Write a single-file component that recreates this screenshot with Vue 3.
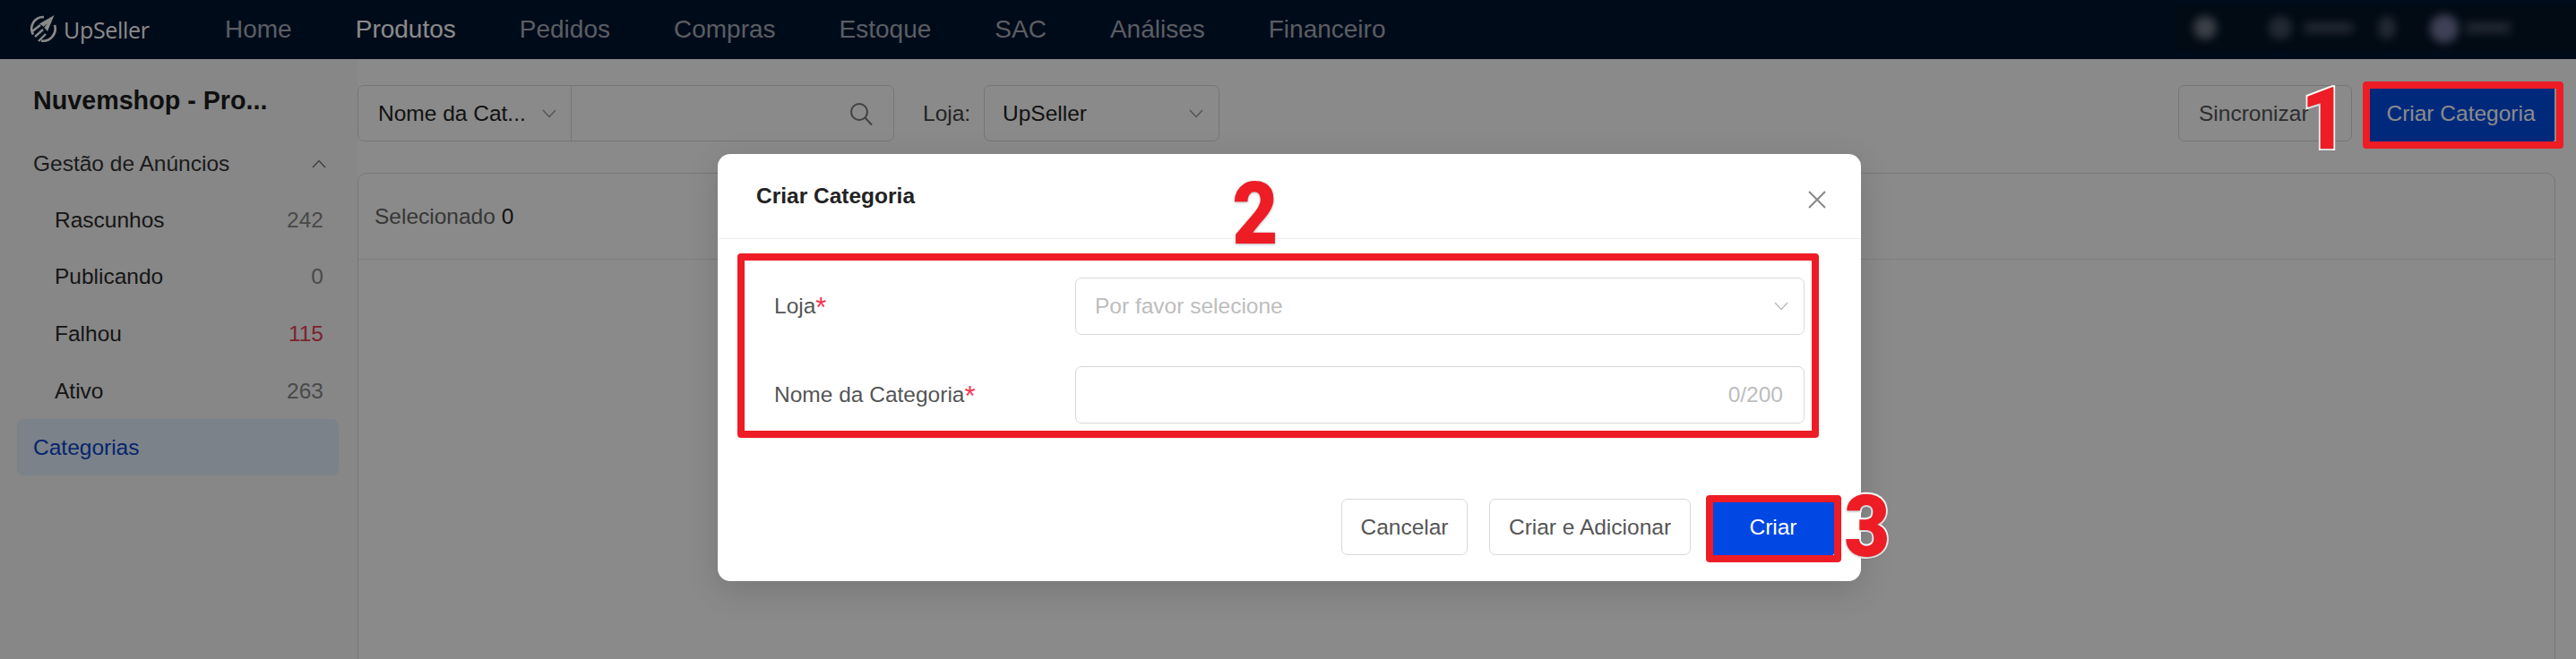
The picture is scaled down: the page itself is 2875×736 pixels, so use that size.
<script setup>
const nav = ['Home', 'Produtos', 'Pedidos', 'Compras', 'Estoque', 'SAC', 'Análises', 'Financeiro']
const items = [
  { label: 'Rascunhos', count: 242 },
  { label: 'Publicando', count: 0 },
  { label: 'Falhou', count: 115, danger: true },
  { label: 'Ativo', count: 263 }
]
</script>

<template>
  <div class="page">
    <header class="topbar">
      <div class="logo">
        <svg class="logo-mark" viewBox="0 0 32 32" width="32" height="32" fill="none">
          <path d="M5 22.5A13 13 0 0 1 17 3" stroke="#8c8c8c" stroke-width="2.6" />
          <path d="M29 12A13.5 13.5 0 0 1 14 29.5" stroke="#8c8c8c" stroke-width="2.6" />
          <path d="M28.5 1 12 10.5l4.6 3.2 4.2-3.4-3.4 4.4 3.6 4.4z" fill="#8c8c8c" />
          <path d="M4 19 13 12M7 25 16 17M11 30 19 22" stroke="#8c8c8c" stroke-width="2.4" />
        </svg>
        <span class="logo-text">UpSeller</span>
      </div>
      <nav class="nav">
        <a v-for="n in nav" :key="n" :class="{ active: n === 'Produtos' }">{{ n }}</a>
      </nav>
      <div class="blurred">
        <i class="dot d1"></i>
        <i class="dot d2"></i><i class="bar b1"></i>
        <i class="dot d3"></i>
        <i class="dot d4"></i><i class="bar b2"></i>
      </div>
    </header>

    <div class="content">
      <aside class="sidebar">
        <h2>Nuvemshop - Pro...</h2>
        <div class="group">
          <span>Gestão de Anúncios</span>
          <svg width="16" height="10" viewBox="0 0 16 10" fill="none"><path d="M1 9 8 1.5 15 9" stroke="#777" stroke-width="1.5" /></svg>
        </div>
        <div v-for="it in items" :key="it.label" class="item">
          <span>{{ it.label }}</span>
          <span class="count" :class="{ danger: it.danger }">{{ it.count }}</span>
        </div>
        <div class="selected">Categorias</div>
      </aside>

      <main class="main">
        <div class="toolbar">
          <div class="search">
            <div class="search-type">
              <span>Nome da Cat...</span>
              <svg class="chev" width="16" height="10" viewBox="0 0 16 10" fill="none"><path d="M1 1 8 8.5 15 1" stroke="#999" stroke-width="1.4" /></svg>
            </div>
            <div class="search-box">
              <svg width="26" height="26" viewBox="0 0 26 26" fill="none"><circle cx="11" cy="11" r="9" stroke="#777" stroke-width="2" /><path d="M17.5 17.5 25 25.5" stroke="#777" stroke-width="2" /></svg>
            </div>
          </div>
          <span class="loja">Loja:</span>
          <div class="store">
            <span>UpSeller</span>
            <svg class="chev" width="16" height="10" viewBox="0 0 16 10" fill="none"><path d="M1 1 8 8.5 15 1" stroke="#999" stroke-width="1.4" /></svg>
          </div>
          <div class="actions">
            <button class="btn">Sincronizar</button>
            <button class="btn primary">Criar Categoria</button>
          </div>
        </div>
        <section class="card">
          <div class="card-head">Selecionado <b>0</b></div>
        </section>
      </main>
    </div>

    <div class="overlay">
      <div class="dialog">
        <div class="dialog-head">
          <span>Criar Categoria</span>
          <svg width="20" height="20" viewBox="0 0 20 20" fill="none"><path d="M1 1 19 19M19 1 1 19" stroke="#888" stroke-width="2" /></svg>
        </div>
        <div class="form">
          <div class="row">
            <label>Loja<em>*</em></label>
            <div class="field">
              <span class="ph">Por favor selecione</span>
              <svg width="16" height="10" viewBox="0 0 16 10" fill="none"><path d="M1 1 8 8.5 15 1" stroke="#bbb" stroke-width="1.4" /></svg>
            </div>
          </div>
          <div class="row">
            <label>Nome da Categoria<em>*</em></label>
            <div class="field end"><span class="ph">0/200</span></div>
          </div>
        </div>
        <div class="footer">
          <button class="btn light">Cancelar</button>
          <button class="btn light">Criar e Adicionar</button>
          <button class="btn blue">Criar</button>
        </div>
      </div>
    </div>

    <div class="mark m1"></div>
    <div class="mark m2"></div>
    <div class="mark m3"></div>
    <span class="num n1">1</span>
    <span class="num n2">2</span>
    <span class="num n3">3</span>
  </div>
</template>

<style scoped>
.page {
  position: relative;
  width: 2875px;
  height: 736px;
  overflow: hidden;
  background: #fff;
  font-family: "Liberation Sans", Arial, sans-serif;
  font-size: 24.5px;
  color: #333;
}
.topbar {
  height: 66px;
  background: #001630;
  display: flex;
  align-items: center;
  padding-left: 32px;
  position: relative;
}
.logo { display: flex; align-items: center; width: 220px; flex: none; }
.logo-mark { filter: brightness(1.85); margin-top: -3px; }
.logo-text { margin-left: 7px; font-family: "Open Sans", sans-serif; font-size: 25px; color: #fff; letter-spacing: -0.3px; }
.nav { display: flex; gap: 71px; font-size: 28px; color: #a7acb8; margin-left: -1px; }
.nav .active { color: #fff; }
.blurred {
  position: absolute;
  left: 2430px;
  top: 8px;
  width: 445px;
  height: 48px;
  background: #041426;
  filter: blur(1.5px);
}
.dot, .bar { position: absolute; filter: blur(5px); }
.dot { width: 26px; height: 26px; border-radius: 50%; top: 10px; background: #5a6475; }
.bar { height: 12px; top: 17px; background: #3f4a5c; }
.d1 { left: 18px; background: #6f7785; }
.d2 { left: 102px; background: #404d60; }
.b1 { left: 142px; width: 54px; }
.d3 { left: 224px; width: 20px; background: #404d60; }
.d4 { left: 282px; width: 32px; height: 32px; top: 8px; background: #74799f; }
.b2 { left: 322px; width: 50px; }

.content { display: flex; height: 670px; }
.sidebar {
  width: 399px;
  flex: none;
  background: #fafafa;
  box-sizing: border-box;
  padding: 29px 21px 0 19px;
}
.sidebar h2 {
  margin: 0 0 0 18px;
  font-size: 28.7px;
  line-height: 34px;
  font-weight: 700;
  color: #1c1c1c;
}
.group {
  margin-top: 22px;
  padding: 0 0 0 18px;
  height: 63px;
  display: flex;
  align-items: center;
  justify-content: space-between;
  color: #333;
}
.group svg { margin-right: 14px; }
.item {
  height: 63.6px;
  padding: 0 17px 0 42px;
  display: flex;
  align-items: center;
  justify-content: space-between;
  color: #2a2a2a;
}
.count { color: #888; }
.count.danger { color: #e94057; }
.selected {
  height: 63px;
  padding-left: 18px;
  display: flex;
  align-items: center;
  background: #e5f0ff;
  border-radius: 7px;
  color: #0a45c8;
}

.main { flex: 1; min-width: 0; padding: 29px 24px 0 0; background: #fff; }
.toolbar { display: flex; align-items: center; height: 63px; }
.search {
  width: 599px;
  height: 63px;
  box-sizing: border-box;
  border: 1px solid #d9d9d9;
  border-radius: 7px;
  display: flex;
}
.search-type {
  width: 238px;
  box-sizing: border-box;
  padding: 0 16px 0 22px;
  display: flex;
  align-items: center;
  justify-content: space-between;
  border-right: 1px solid #d9d9d9;
  color: #222;
}
.search-box {
  flex: 1;
  display: flex;
  align-items: center;
  justify-content: flex-end;
  padding-right: 23px;
}
.loja { margin-left: 32px; width: 68px; color: #444; }
.store {
  width: 263px;
  height: 63px;
  box-sizing: border-box;
  border: 1px solid #d9d9d9;
  border-radius: 7px;
  padding: 0 17px 0 20px;
  display: flex;
  align-items: center;
  justify-content: space-between;
  color: #222;
}
.actions { margin-left: auto; display: flex; gap: 17px; }
.btn {
  height: 63px;
  box-sizing: border-box;
  padding: 0 22px;
  border: 1px solid #d9d9d9;
  border-radius: 7px;
  background: #fff;
  font: inherit;
  color: #555;
}
.actions .btn:first-child { width: 194px; text-align: left; }
.btn.primary { width: 209px; padding: 0; background: #004de6; border-color: #004de6; border-radius: 2px; color: #fff; }
.card {
  margin-top: 35px;
  margin-right: -1px;
  height: 600px;
  border: 1px solid #dcdcdc;
  border-radius: 10px;
}
.card-head {
  height: 95px;
  padding-left: 18px;
  display: flex;
  align-items: center;
  gap: 7px;
  border-bottom: 1px solid #e6e6e6;
  color: #666;
}
.card-head b { font-weight: 400; color: #222; }

.overlay {
  position: absolute;
  inset: 0;
  background: rgba(0, 0, 0, 0.46);
  padding: 172px 0 0 801px;
}
.dialog {
  width: 1276px;
  height: 477px;
  background: #fff;
  border-radius: 14px;
  box-shadow: 0 10px 36px rgba(0, 0, 0, 0.14);
}
.dialog-head {
  height: 95px;
  box-sizing: border-box;
  padding: 0 39px 0 43px;
  display: flex;
  align-items: center;
  justify-content: space-between;
  border-bottom: 1px solid #eee;
  font-weight: 700;
  color: #222;
}
.dialog-head svg { margin-top: 7px; }
.form { padding: 43px 63px 0 63px; display: flex; flex-direction: column; gap: 35px; }
.row { display: flex; align-items: center; }
.row label { width: 336px; color: #555; }
.row em { font-style: normal; font-size: 31px; line-height: 0; vertical-align: -4px; color: #f5344f; }
.field {
  flex: 1;
  height: 64px;
  box-sizing: border-box;
  border: 1px solid #d9d9d9;
  border-radius: 7px;
  padding: 0 17px 0 21px;
  display: flex;
  align-items: center;
  justify-content: space-between;
}
.field.end { justify-content: flex-end; padding-right: 23px; }
.ph { color: #bdbdbd; }
.footer {
  margin-top: 84px;
  padding-right: 30px;
  display: flex;
  justify-content: flex-end;
  gap: 24px;
}
.footer .btn { height: 63px; }
.footer .light:first-child { width: 141px; padding: 0; }
.footer .light:nth-child(2) { width: 225px; padding: 0; }
.btn.blue { width: 136px; padding: 0; background: #0047e4; border-color: #0047e4; border-radius: 2px; color: #fff; }

.mark {
  position: absolute;
  box-sizing: border-box;
  border: 8px solid #ee1c25;
  border-radius: 4px;
}
.m1 { left: 2637px; top: 91px; width: 224px; height: 75px; }
.m2 { left: 823px; top: 283px; width: 1207px; height: 206px; }
.m3 { left: 1904px; top: 553px; width: 151px; height: 75px; }
.num {
  position: absolute;
  font-family: Roboto, "Liberation Sans", sans-serif;
  font-weight: 900;
  font-size: 96px;
  line-height: 96px;
  color: #ee1c25;
  -webkit-text-stroke: 4px #fff;
  paint-order: stroke fill;
  transform: scaleX(0.92);
  text-shadow: 0 1px 3px rgba(0, 0, 0, 0.3);
}
.n1 { left: 2566px; top: 85px; }
.n2 { left: 1373px; top: 191px; }
.n3 { left: 2056px; top: 540px; }
</style>
